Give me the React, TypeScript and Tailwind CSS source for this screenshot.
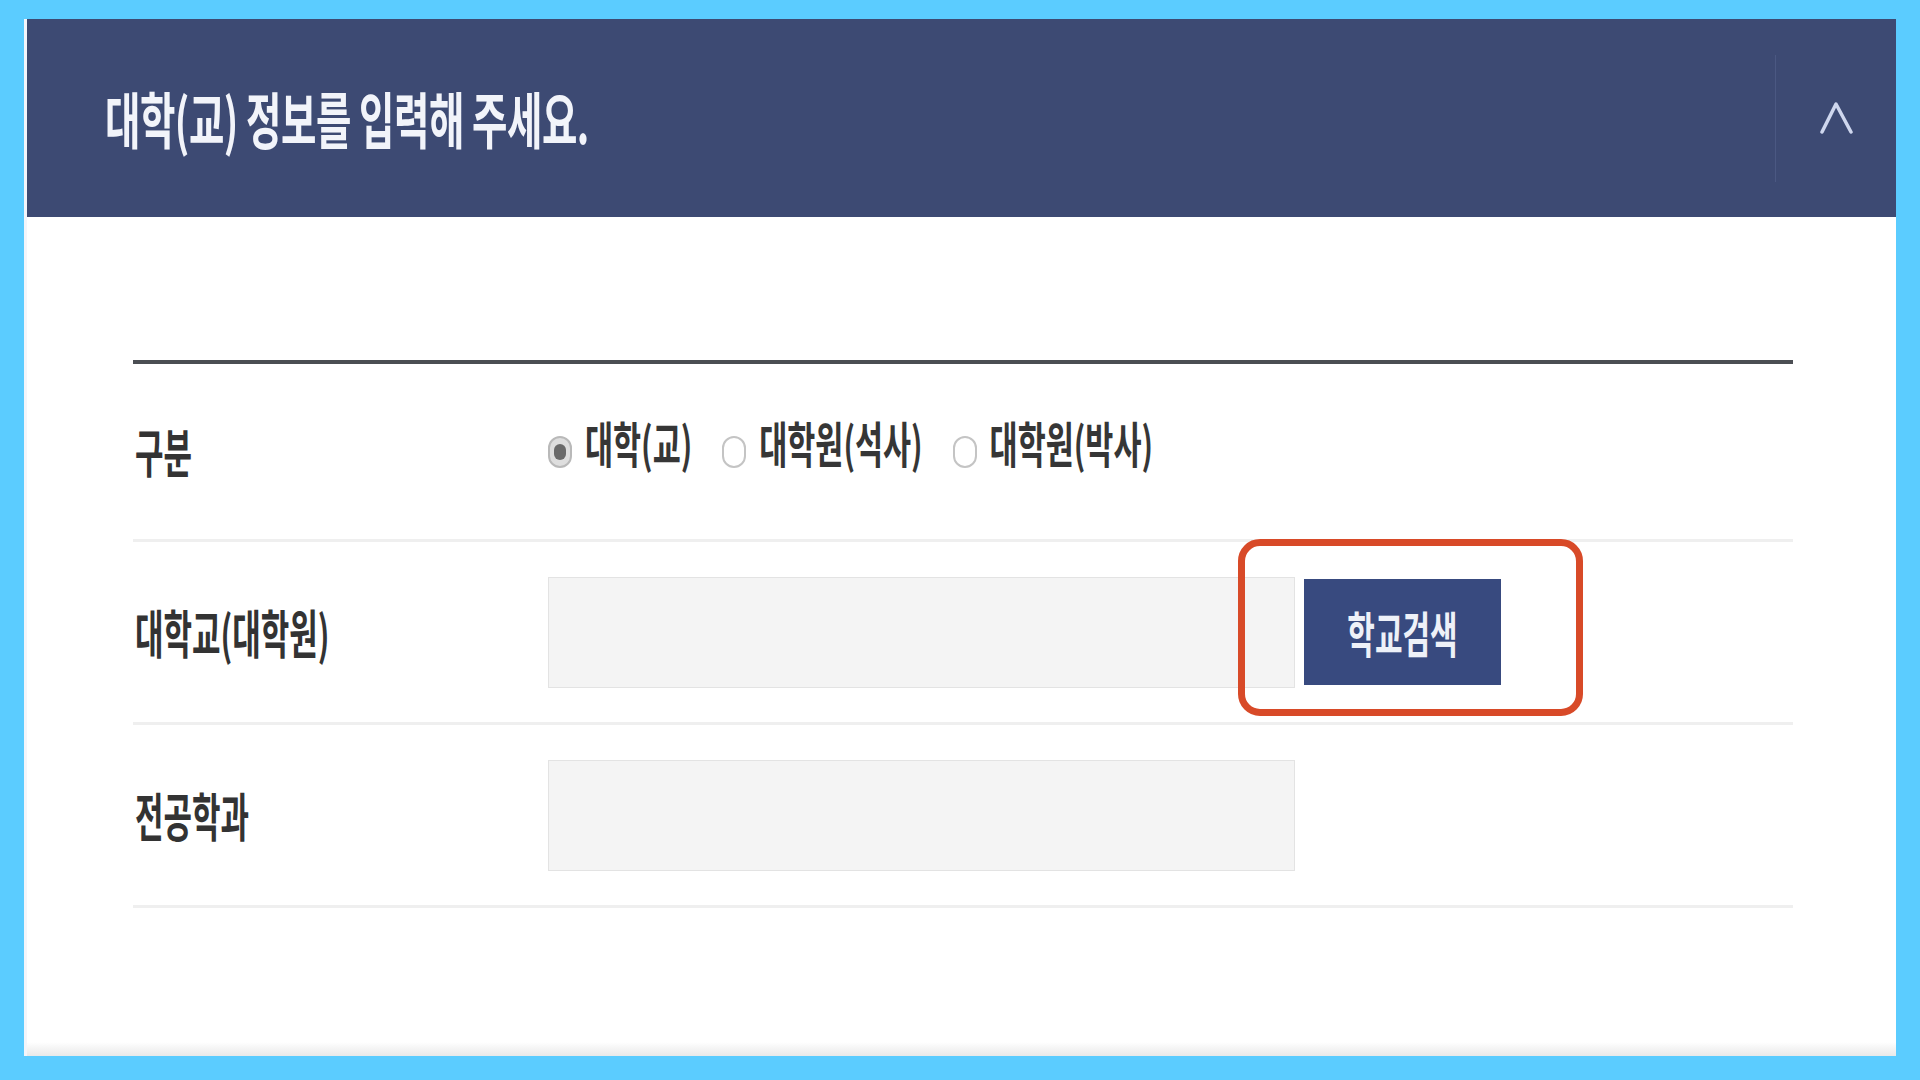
import React from 'react';

const font = "font-['Noto_Sans_CJK_KR','Noto_Sans',sans-serif]";

function Tall({ children, className = '' }: { children: React.ReactNode; className?: string }) {
  // the source capture is squeezed sideways, so glyphs are drawn taller than wide
  return <span className={`inline-block origin-center whitespace-nowrap ${className}`}>{children}</span>;
}

function Radio({ label, checked }: { label: string; checked?: boolean }) {
  return (
    <label className="flex items-center">
      <span
        className={`flex items-center justify-center w-[24px] h-[32px] rounded-full border-2 ${
          checked ? 'border-[#b9b9b9] bg-[#dedede]' : 'border-[#c4c4c4] bg-white'
        }`}
      >
        {checked && <span className="w-[12px] h-[16px] rounded-full bg-[#6a6a6a]" />}
      </span>
      <Tall className="ml-[13px] text-[30.5px] font-bold text-[#363636] scale-y-[1.6] -translate-y-[8px]">{label}</Tall>
    </label>
  );
}

function Row({ label, h, children }: { label: string; h: string; children: React.ReactNode }) {
  return (
    <div className={`relative flex items-center ${h} border-b-[3px] border-[#efefef]`}>
      <div className="w-[415px] shrink-0 pl-[2px]">
        <Tall className="text-[31px] font-bold text-[#333] scale-y-[1.68]">{label}</Tall>
      </div>
      {children}
    </div>
  );
}

export default function App() {
  return (
    <div className={`w-[1920px] h-[1080px] bg-[#5bccff] pt-[19px] px-[24px] pb-[24px] flex ${font}`}>
      <div className="flex-1 flex flex-col bg-white border-l-[3px] border-[#f3f5fa]">
        {/* header */}
        <div className="h-[198px] bg-[#3d4a73] flex items-center">
          <div className="flex-1 pl-[78px]">
            <Tall className="text-[38.5px] font-bold text-[#f2f4fa] scale-y-[1.6] tracking-[-0.5px]">
              대학(교) 정보를 입력해 주세요.
            </Tall>
          </div>
          <div className="w-px h-[127px] bg-[#4b5882]" />
          <div className="w-[120px] flex justify-center">
            <svg width="33" height="34" viewBox="0 0 33 34" fill="none">
              <polyline points="2,31 16,3 31,31" stroke="#cfd7ee" strokeWidth="3.5" strokeLinecap="round" strokeLinejoin="round" />
            </svg>
          </div>
        </div>

        {/* body */}
        <div className="flex-1 pl-[106px] pr-[103px] pt-[143px]">
          <div className="border-t-4 border-[#4b4e53]">
            <Row label="구분" h="h-[178px]">
              <div className="flex items-center gap-[30px]">
                <Radio label="대학(교)" checked />
                <Radio label="대학원(석사)" />
                <Radio label="대학원(박사)" />
              </div>
            </Row>
            <Row label="대학교(대학원)" h="h-[183px]">
              <div className="w-[747px] h-[111px] bg-[#f4f4f4] border border-[#e3e3e3]" />
              <button className="ml-[9px] w-[197px] h-[106px] bg-[#384a7f] flex items-center justify-center">
                <Tall className="text-[30px] font-bold text-[#eef1f8] scale-y-[1.63]">학교검색</Tall>
              </button>
              {/* highlight box */}
              <div className="absolute left-[1105px] top-[-3px] w-[345px] h-[177px] rounded-[22px] border-[7px] border-[#d84a28] pointer-events-none" />
            </Row>
            <Row label="전공학과" h="h-[183px]">
              <div className="w-[747px] h-[111px] bg-[#f4f4f4] border border-[#e3e3e3]" />
            </Row>
          </div>
        </div>

        <div className="h-[14px] bg-gradient-to-b from-white to-[#e9e9e9]" />
      </div>
    </div>
  );
}
